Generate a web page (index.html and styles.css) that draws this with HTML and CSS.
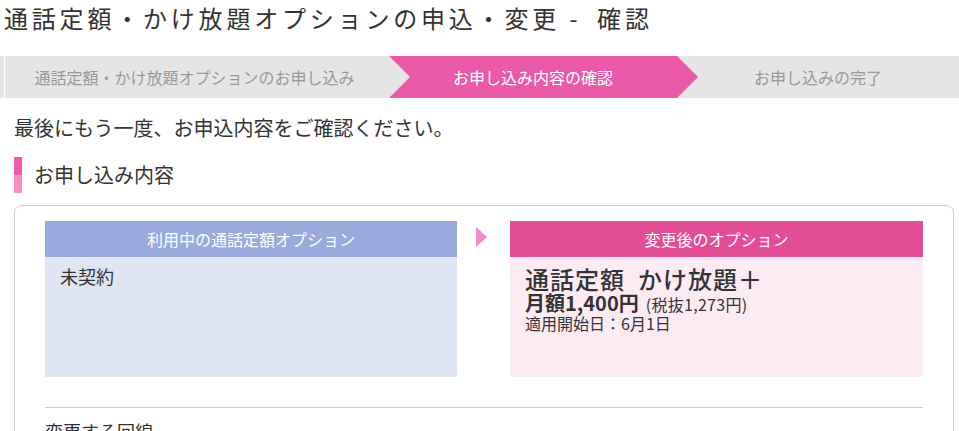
FILE: index.html
```html
<!DOCTYPE html>
<html lang="ja">
<head>
<meta charset="utf-8">
<title>通話定額・かけ放題オプションの申込・変更 - 確認</title>
<link rel="stylesheet" href="styles.css">
</head>
<body>
<h1 class="page-title">通話定額・かけ放題オプションの申込・変更 -&ensp;確認</h1>
<ol class="steps">
  <li class="step step-first">通話定額・かけ放題オプションのお申し込み</li>
  <li class="step step-current">お申し込み内容の確認</li>
  <li class="step step-last">お申し込みの完了</li>
</ol>
<main class="main">
  <p class="intro">最後にもう一度、お申込内容をご確認ください。</p>
  <h2 class="section-title"><span class="section-bar"></span>お申し込み内容</h2>
  <section class="card">
    <div class="compare">
      <div class="panel panel-current">
        <div class="panel-head">利用中の通話定額オプション</div>
        <div class="panel-body">
          <p class="plain">未契約</p>
        </div>
      </div>
      <div class="arrow-col"><span class="arrow"></span></div>
      <div class="panel panel-new">
        <div class="panel-head">変更後のオプション</div>
        <div class="panel-body">
          <p class="plan-name">通話定額&ensp;かけ放題＋</p>
          <p class="plan-price">月額1,400円<span class="tax">(税抜1,273円)</span></p>
          <p class="plan-date">適用開始日：6月1日</p>
        </div>
      </div>
    </div>
    <hr class="divider">
    <h3 class="sub-title">変更する回線</h3>
  </section>
</main>
</body>
</html>
```
FILE: styles.css
```css
html, body {
  margin: 0;
  padding: 0;
  background: #fff;
}
body {
  font-family: "Noto Sans CJK JP", "Noto Sans", sans-serif;
  color: #333;
  overflow: hidden;
}
p { margin: 0; }

.page-title {
  margin: 0 0 20px 0;
  padding-left: 4px;
  font-size: 24px;
  line-height: 36px;
  font-weight: 400;
  letter-spacing: 3.8px;
  color: #333;
  white-space: nowrap;
}

.steps {
  list-style: none;
  margin: 0;
  padding: 0;
  display: flex;
  height: 42px;
}
.step {
  position: relative;
  display: flex;
  align-items: center;
  justify-content: center;
  font-size: 16px;
  color: #999;
  background: #e5e5e5;
  white-space: nowrap;
}
.step-first {
  width: 389px;
  background: linear-gradient(to right, #e5e5e5 4px, #fff 4px, #fff 5px, #e5e5e5 5px);
  z-index: 2;
}
.step-current {
  width: 288px;
  background: #eb5aa8;
  color: #fff;
  z-index: 1;
}
.step-last {
  flex: 1;
}
.step-first::after,
.step-current::after {
  content: "";
  position: absolute;
  top: 0;
  right: -21px;
  border-top: 21px solid transparent;
  border-bottom: 21px solid transparent;
  border-left: 21px solid #e5e5e5;
}
.step-current::after {
  border-left-color: #eb5aa8;
}

.main {
  padding: 0 5px 0 14px;
}
.intro {
  margin-top: 16px;
  font-size: 20px;
  line-height: 28px;
  white-space: nowrap;
}
.section-title {
  margin: 15px 0 12px 0;
  display: flex;
  align-items: center;
  gap: 12px;
  font-size: 20px;
  font-weight: 400;
  line-height: 36px;
  height: 36px;
}
.section-bar {
  width: 8px;
  height: 36px;
  background: linear-gradient(to bottom, #f05aaa 50%, #f78fc5 50%);
}

.card {
  border: 1px solid #ccc;
  border-radius: 8px;
  padding: 15px 30px 0 30px;
  height: 300px;
  box-sizing: border-box;
}
.compare {
  display: grid;
  grid-template-columns: 412px 53px 1fr;
}
.panel-head {
  height: 36px;
  display: flex;
  align-items: center;
  justify-content: center;
  color: #fff;
  font-size: 16px;
}
.panel-body {
  height: 120px;
  box-sizing: border-box;
  padding: 0 15px;
}
.panel-current .panel-head { background: #99aadd; }
.panel-current .panel-body { background: #e0e5f4; padding-top: 6px; }
.panel-new .panel-head { background: #e24d95; }
.panel-new .panel-body { background: #fdebf4; padding-top: 9px; }

.plain {
  font-size: 18px;
  line-height: 26px;
}
.arrow-col {
  display: flex;
  justify-content: flex-start;
  padding-top: 6px;
  padding-left: 19px;
}
.arrow {
  width: 0;
  height: 0;
  border-top: 10px solid transparent;
  border-bottom: 10px solid transparent;
  border-left: 11px solid #f08cc8;
}
.plan-name {
  font-size: 24px;
  line-height: 26px;
  font-weight: 500;
  letter-spacing: 1px;
  white-space: nowrap;
}
.plan-price {
  font-size: 20px;
  line-height: 21px;
  font-weight: 700;
  white-space: nowrap;
}
.tax {
  margin-left: 7px;
  font-size: 16px;
  font-weight: 400;
  letter-spacing: 0.3px;
}
.plan-date {
  font-size: 16px;
  line-height: 17px;
}
.divider {
  margin: 30px 0 0 0;
  border: 0;
  border-top: 1px solid #ccc;
  height: 0;
}
.sub-title {
  margin: 10px 0 0 0;
  font-size: 18px;
  font-weight: 400;
  line-height: 26px;
}
```
